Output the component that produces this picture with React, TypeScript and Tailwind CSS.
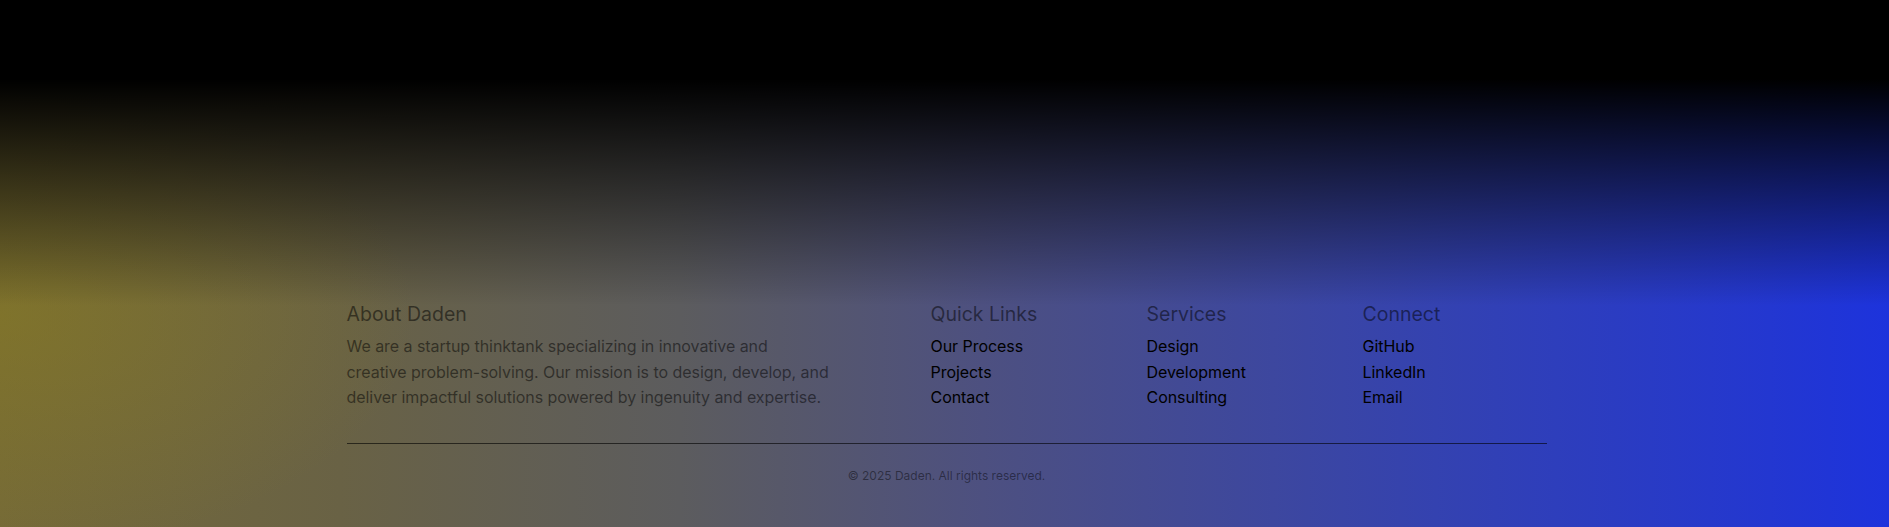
import React from 'react';

const columns = [
  { title: 'Quick Links', links: ['Our Process', 'Projects', 'Contact'] },
  { title: 'Services', links: ['Design', 'Development', 'Consulting'] },
  { title: 'Connect', links: ['GitHub', 'LinkedIn', 'Email'] },
];

const App: React.FC = () => {
  return (
    <footer
      className="w-full h-[527px] font-['Inter',sans-serif] bg-[linear-gradient(180deg,#000_15%,rgba(0,0,0,0)_58%),radial-gradient(ellipse_22%_45%_at_0%_60%,rgba(140,126,28,0.45),rgba(140,126,28,0)),linear-gradient(90deg,#756a38_0%,#696245_18%,#5c5c5e_36%,#4d5080_52%,#3442b0_76%,#1d33dc_100%)]"
    >
      <div className="max-w-[1200px] mx-auto pt-[300px] translate-x-[2px]">
        <div className="grid grid-cols-[3fr_1fr_1fr_1fr] gap-8">
          {/* About */}
          <div>
            <h3 className="text-[19.5px] leading-7 text-black/50 mb-[6px]">About Daden</h3>
            <p className="text-base leading-[25.5px] text-black/50 tracking-[-0.05px]">
              We are a startup thinktank specializing in innovative and
              <br />
              creative problem-solving. Our mission is to design, develop, and
              <br />
              deliver impactful solutions powered by ingenuity and expertise.
            </p>
          </div>

          {columns.map((col) => (
            <div key={col.title}>
              <h3 className="text-[19.5px] leading-7 text-black/50 mb-[6px]">{col.title}</h3>
              <ul className="flex flex-col">
                {col.links.map((link) => (
                  <li key={link} className="text-base leading-[25.5px] text-black tracking-[-0.05px]">
                    <a href="#">{link}</a>
                  </li>
                ))}
              </ul>
            </div>
          ))}
        </div>

        {/* Bottom bar */}
        <div className="mt-[32px] border-t border-black/60 pt-6 text-center">
          <p className="text-xs text-black/45">© 2025 Daden. All rights reserved.</p>
        </div>
      </div>
    </footer>
  );
};

export default App;
